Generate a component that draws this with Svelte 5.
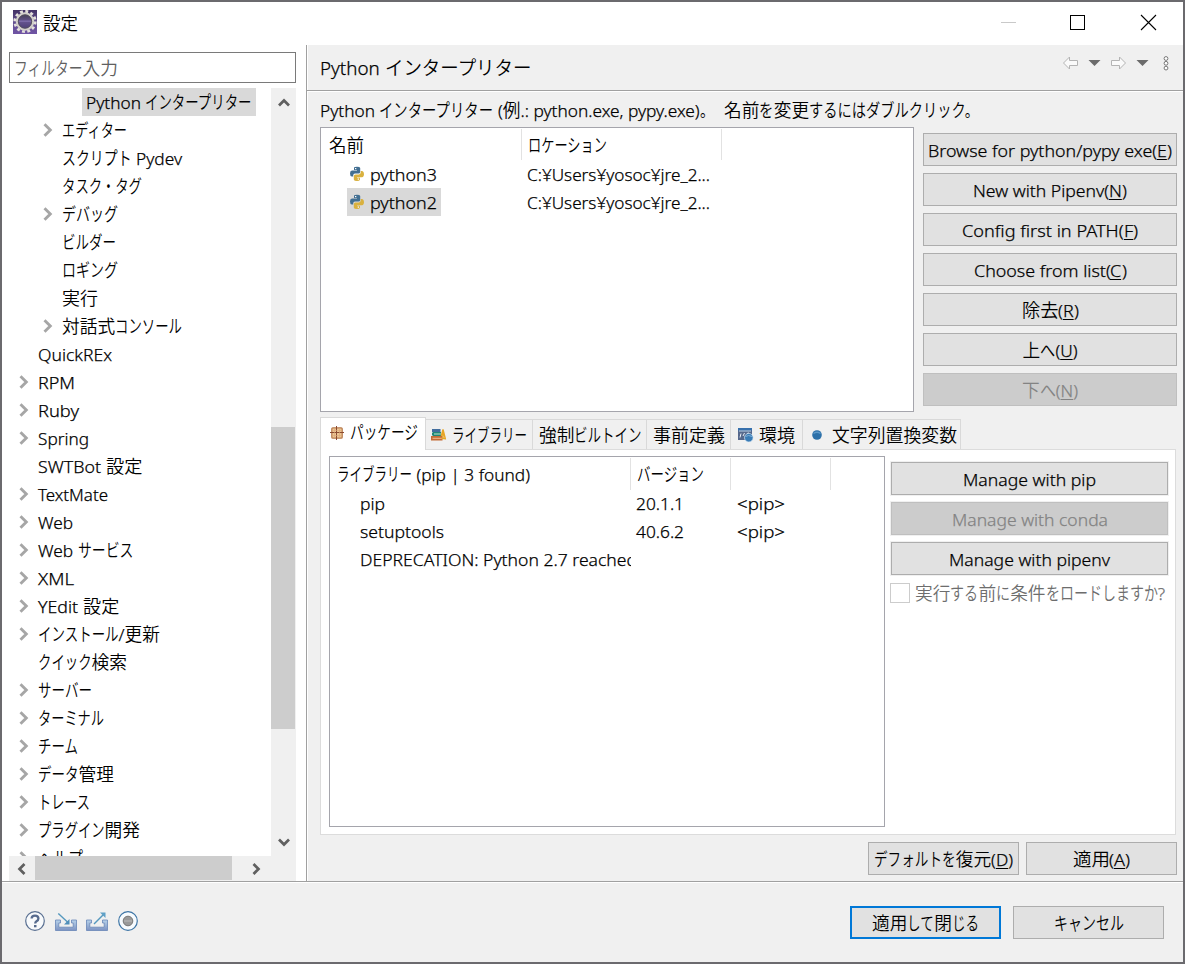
<script>
  const tree = [
    ['Python インタープリター', 2, false, 166, true],
    ['エディター', 1, true, 65],
    ['スクリプト Pydev', 1, false, 120],
    ['タスク・タグ', 1, false, 80],
    ['デバッグ', 1, true, 56],
    ['ビルダー', 1, false, 54],
    ['ロギング', 1, false, 56],
    ['実行', 1, false, 36],
    ['対話式コンソール', 1, true, 120],
    ['QuickREx', 0, false, 74],
    ['RPM', 0, true, 37],
    ['Ruby', 0, true, 41],
    ['Spring', 0, true, 51],
    ['SWTBot 設定', 0, false, 104],
    ['TextMate', 0, true, 70],
    ['Web', 0, true, 35],
    ['Web サービス', 0, true, 95],
    ['XML', 0, true, 36],
    ['YEdit 設定', 0, true, 81],
    ['インストール/更新', 0, true, 122],
    ['クイック検索', 0, false, 89],
    ['サーバー', 0, true, 54],
    ['ターミナル', 0, true, 66],
    ['チーム', 0, true, 40],
    ['データ管理', 0, true, 76],
    ['トレース', 0, true, 52],
    ['プラグイン開発', 0, true, 102],
    ['ヘルプ', 0, true, 45]
  ];
  const sideButtons = [
    ['Browse for python/pypy exe(&E)', 244],
    ['New with Pipenv(&N)', 154],
    ['Config first in PATH(&F)', 176],
    ['Choose from list(&C)', 153],
    ['除去(&R)', 57],
    ['上へ(&U)', 55],
    ['下へ(&N)', 56, true]
  ];
  const packages = [
    ['pip', 25, '20.1.1', 48, '<pip>', 48],
    ['setuptools', 84, '40.6.2', 48, '<pip>', 48],
    ['DEPRECATION: Python 2.7 reached', 277, '', 0, '', 0]
  ];

  function runs(s) {
    return (s.match(/&[A-Z]|[\u3001-\u30ff]+|[\u4e00-\u9fff]+|[^&\u3001-\u30ff\u4e00-\u9fff]+/g) || []).map((r) => {
      if (r[0] === '&') return { kind: 'key', s: r[1] };
      if (/[\u3001-\u30ff]/.test(r)) return { kind: 'kana', s: r };
      if (/[\u4e00-\u9fff]/.test(r)) return { kind: 'kanji', s: r };
      return { kind: 'latin', s: r };
    });
  }

  /* Proportional setting: kana take up the slack, otherwise the whole line does. */
  function fit(node, width) {
    const parts = [...node.children];
    const sizes = parts.map((p) => p.getBoundingClientRect().width);
    const total = sizes.reduce((a, b) => a + b, 0);
    const kana = parts.reduce((a, p, i) => a + (p.classList.contains('kana') ? sizes[i] : 0), 0);
    const k = kana ? (width - total + kana) / kana : width / total;
    parts.forEach((p, i) => {
      if (kana && !p.classList.contains('kana')) return;
      p.style.transform = `scaleX(${k})`;
      p.style.marginRight = `${sizes[i] * (k - 1)}px`;
    });
  }
</script>

{#snippet txt(s, w)}<span class="t" use:fit={w}>{#each runs(s) as r}<span class={r.kind}>{r.s}</span>{/each}</span>{/snippet}

{#snippet btn(s, w, off)}<button class="btn" class:off disabled={off}>{@render txt(s, w)}</button>{/snippet}

{#snippet python()}
  <svg class="py" width="16" height="16" viewBox="0 0 16 16">
    <path fill="#426f92" d="M5 1.500Q5.300.8 8 .8q3 0 3.200 1.200v4Q11 7.500 9.500 7.500H6Q4.200 7.500 4.200 9.500v1H2.800Q1 10.200 1 7.500 1 4.700 3 4.500h5V4H5z" />
    <path fill="#d9b13f" d="M11.700 5h1.500Q15 5.300 15 8q0 3-2 3.200H8v.6h3v2Q10.500 15 8 15q-3 0-3.200-1.500V10Q5 8.400 6.500 8.400H10q1.700 0 1.700-1.800z" />
    <rect x="6" y="2" width="1.300" height="1.200" fill="#fff" /><rect x="8.700" y="12.500" width="1.300" height="1.200" fill="#fff" />
  </svg>
{/snippet}

<div class="window">
  <header class="titlebar">
    <svg class="app-icon" width="24" height="24" viewBox="0 0 24 24">
      <defs>
        <linearGradient id="pur" x2="0" y2="1"><stop offset="0" stop-color="#433264" /><stop offset=".5" stop-color="#63508f" /><stop offset="1" stop-color="#7054a5" /></linearGradient>
        <linearGradient id="core" x2="0" y2="1"><stop offset="0" stop-color="#3f3c4c" /><stop offset=".5" stop-color="#66548f" /><stop offset="1" stop-color="#4a3c72" /></linearGradient>
      </defs>
      <rect width="24" height="24" fill="url(#pur)" />
      <circle cx="12" cy="11.500" r="10.200" fill="none" stroke="#e4e1dc" stroke-width="2.800" stroke-dasharray="2.900 2.440" />
      <circle cx="12" cy="11.500" r="8.100" fill="url(#core)" stroke="#d2cfca" stroke-width="2.400" />
      <circle cx="12" cy="11.500" r="6.700" fill="none" stroke="#55505c" stroke-width=".9" />
      <path d="M6 11.200h12" stroke="#7d6ca9" stroke-width="1.400" />
    </svg>
    {@render txt('設定', 35)}
    <svg class="winctl" width="160" height="20" viewBox="0 0 160 20">
      <path d="M1 10.500h15" stroke="#c9c9c9" />
      <rect x="70.500" y="3.500" width="14" height="14" fill="none" stroke="#000" />
      <path d="M141 3l15 15M156 3l-15 15" stroke="#000" stroke-width="1.100" />
    </svg>
  </header>

  <main>
    <aside>
      <div class="filter">{@render txt('フィルター入力', 104)}</div>
      <div class="treebox">
        <div class="tree">
          {#each tree as [label, depth, arrow, w, sel]}
            <div class="node d{depth}">
              <span class="twisty">{#if arrow}<svg width="10" height="14" viewBox="0 0 10 14"><path d="M1.500 1.200 7.300 7l-5.800 5.800" fill="none" stroke="#a6a6a6" stroke-width="2.900" /></svg>{/if}</span>
              <span class="lab" class:sel>{@render txt(label, w)}</span>
            </div>
          {/each}
        </div>
        <div class="vbar">
          <svg width="12" height="9" viewBox="0 0 12 9"><path d="M1 7.500 6 2.500l5 5" fill="none" stroke="#606060" stroke-width="2.700" /></svg>
          <div class="vthumb"></div>
          <svg class="down" width="12" height="9" viewBox="0 0 12 9"><path d="M1 1.500 6 6.500l5-5" fill="none" stroke="#606060" stroke-width="2.700" /></svg>
        </div>
      </div>
      <div class="hbar">
        <svg width="9" height="12" viewBox="0 0 9 12"><path d="M7.500 1 2.500 6l5 5" fill="none" stroke="#606060" stroke-width="2.700" /></svg>
        <div class="hthumb"></div>
        <svg width="9" height="12" viewBox="0 0 9 12"><path d="M1.500 1 6.500 6l-5 5" fill="none" stroke="#606060" stroke-width="2.700" /></svg>
      </div>
    </aside>

    <section class="page">
      <div class="head">
        <h1>{@render txt('Python インタープリター', 211)}</h1>
        <svg width="112" height="20" viewBox="0 0 112 20">
          <g fill="#fafafa" stroke="#b4b4b4" stroke-linejoin="round">
            <path d="M.5 10 6.500 4v3.500h8v5h-8V16z" />
            <path d="M62.500 10l-6-6v3.500h-8v5h8V16z" />
          </g>
          <path d="M25.500 7h12l-6 6zM73.500 7h12l-6 6z" fill="#6b6b6b" />
          <g fill="#fff" stroke="#777"><circle cx="103" cy="5.500" r="1.900" /><circle cx="103" cy="10.300" r="1.900" /><circle cx="103" cy="15.100" r="1.900" /></g>
        </svg>
      </div>

      <div class="note">
        {@render txt('Python インタープリター (例.: python.exe, pypy.exe)。', 394)}
        <span class="second">{@render txt('名前を変更するにはダブルクリック。', 255)}</span>
      </div>

      <div class="upper">
        <div class="table interp">
          <div class="thead"><div>{@render txt('名前', 35)}</div><div>{@render txt('ロケーション', 79)}</div></div>
          <div class="row"><div class="name"><span>{@render python()}{@render txt('python3', 67)}</span></div>{@render txt('C:¥Users¥yosoc¥jre_2...', 183)}</div>
          <div class="row"><div class="name"><span class="sel">{@render python()}{@render txt('python2', 67)}</span></div>{@render txt('C:¥Users¥yosoc¥jre_2...', 183)}</div>
        </div>
        <div class="buttons">
          {#each sideButtons as [s, w, off]}{@render btn(s, w, off)}{/each}
        </div>
      </div>

      <div class="tabs">
        <div class="tab active">
          <svg width="14" height="14" viewBox="0 0 14 14"><rect x="1.800" y="1.800" width="10.400" height="10.400" rx="1" fill="#edc795" stroke="#b97d50" stroke-width="1.300" /><path d="M6.500 0v14M0 6.500h14" stroke="#8b4a30" /><path d="M4.500 2v10M9.500 2v10M2 4.500h10M2 9.500h10" stroke="#dca778" stroke-width=".6" /></svg>
          {@render txt('パッケージ', 68)}
        </div>
        <div class="tab lib">
          <svg width="17" height="15" viewBox="0 0 17 15"><path d="M2 2h8.500v3H2z" fill="#426d9d" /><path d="M3 5h8v4H3l-1-1V6z" fill="#1f8778" /><path d="M4 7h7" stroke="#bfe3c6" /><path d="M1 9h11.500v4.500H1z" fill="#c46b35" /><path d="M2.500 11.300h9.500" stroke="#f1be91" /><path d="M11.300 9 13 2.500 15.500 12.500M13 3v8.500M11.500 11.500h4" fill="none" stroke="#e7a526" stroke-width="1.400" /></svg>
          {@render txt('ライブラリー', 75)}
        </div>
        <div class="tab forced">{@render txt('強制ビルトイン', 103)}</div>
        <div class="tab pre">{@render txt('事前定義', 72)}</div>
        <div class="tab env">
          <svg width="17" height="16" viewBox="0 0 17 16"><rect x="1" y="1" width="14" height="12" fill="#56688c" /><rect x="1" y="1" width="14" height="2.500" fill="#3770ac" /><path d="M2 4h12" stroke="#bad2e8" /><path d="M3 10.500l1-4M6 9l1.500-3M10 6.500l2-.5" stroke="#e9eef5" stroke-width="1" /><circle cx="11.800" cy="10.700" r="4.300" fill="#397bb5" stroke="#d7e8f7" stroke-width=".7" /><path d="M8.500 9.500q3-2 6.500 0" fill="none" stroke="#7fb0d8" /></svg>
          {@render txt('環境', 36)}
        </div>
        <div class="tab vars">
          <svg width="12" height="12" viewBox="0 0 12 12"><circle cx="6" cy="6" r="4.800" fill="#2c70a9" /><path d="M2.500 4.500Q6 2 9.500 4.500" fill="none" stroke="#5d98c8" stroke-width="1.500" /></svg>
          {@render txt('文字列置換変数', 125)}
        </div>
      </div>

      <div class="panel">
        <div class="table pkgs">
          <div class="thead"><div>{@render txt('ライブラリー (pip | 3 found)', 193)}</div><div>{@render txt('バージョン', 67)}</div><div></div></div>
          {#each packages as [a, aw, b, bw, c, cw]}
            <div class="row"><div class="pname">{@render txt(a, aw)}</div><div class="pver">{#if b}{@render txt(b, bw)}{/if}</div>{#if c}{@render txt(c, cw)}{/if}</div>
          {/each}
        </div>
        <div class="manage">
          {@render btn('Manage with pip', 133)}
          {@render btn('Manage with conda', 156, true)}
          {@render btn('Manage with pipenv', 161)}
          <div class="check"><i></i>{@render txt('実行する前に条件をロードしますか?', 250)}</div>
        </div>
      </div>

      <div class="apply">
        {@render btn('デフォルトを復元(&D)', 139)}
        {@render btn('適用(&A)', 58)}
      </div>
    </section>
  </main>

  <footer>
    <svg width="116" height="24" viewBox="0 0 116 24">
      <defs><linearGradient id="tray" x2="0" y2="1"><stop offset="0" stop-color="#b7d2ea" /><stop offset="1" stop-color="#7c92c2" /></linearGradient></defs>
      <circle cx="11" cy="12" r="9.300" fill="#f8fafc" stroke="#596f91" stroke-width="1.200" />
      <path d="M7.600 9.500Q7.700 6.700 11 6.700t3.400 2.700Q14.400 11 12.500 12.200 11.200 13 11.200 14.600" fill="none" stroke="#576b8e" stroke-width="2.300" /><rect x="10" y="16" width="2.500" height="2.300" fill="#576b8e" />
      <g fill="url(#tray)" stroke="#6886b8" stroke-width=".8">
        <path d="M31.500 11h5v3h-1.700v4.200h14.400V14h-1.700v-3h5v10.500h-21z" />
        <path d="M62.500 11h5v3h-1.700v4.200h14.400V14h-1.700v-3h5v10.500h-21z" />
      </g>
      <path d="M34.300 4.500 44 13.500" fill="none" stroke="#5598be" stroke-width="1.400" /><path d="M45.500 15.500h-5.500l5.500-5.500z" fill="#4f8eba" />
      <path d="M70 15 80 5" fill="none" stroke="#5598be" stroke-width="1.400" /><path d="M81.500 3.500v5.500l-5.500-5.500z" fill="#5fa0c6" />
      <circle cx="104" cy="12" r="9.300" fill="#f7fbfe" stroke="#3d75a6" stroke-width="1.200" />
      <circle cx="104" cy="12" r="4.800" fill="#999" stroke="#777" /><path d="M100 12h8" stroke="#bbb" />
    </svg>
    <div class="actions">
      <button class="btn primary">{@render txt('適用して閉じる', 107)}</button>
      {@render btn('キャンセル', 70)}
    </div>
  </footer>
</div>

<style>
  :global(body) { background: #f0f0f0; overflow: hidden; }
  * { box-sizing: border-box; }
  .window {
    width: 1185px; height: 964px; border: 2px solid #6b6a6e; background: #f0f0f0;
    display: flex; flex-direction: column; color: #000;
    font: 350 17.3px/28px "Noto Sans", "Noto Sans CJK JP", sans-serif;
  }
  svg { display: block; flex: none; }
  .t { display: inline-flex; align-items: baseline; white-space: pre; flex: none; height: 28px; line-height: 28px; }
  .t::before { content: ""; width: 0; height: 20.500px; align-self: baseline; }
  .t span { display: block; transform-origin: 0 50%; flex: none; }
  .latin, .key { -webkit-text-stroke: .25px currentColor; }
  .kana, .kanji { font-family: "Noto Sans CJK JP", sans-serif; font-size: 17.7px; line-height: 25px; font-weight: 350; }
  .kana { font-size: 18.500px; }
  .key { text-decoration: underline; text-underline-offset: 2px; text-decoration-thickness: 1px; text-decoration-skip-ink: none; }

  .titlebar { height: 43px; background: #fff; display: flex; align-items: center; padding-left: 11px; flex: none; }
  .app-icon { margin: 0 6px 3px 0; }
  .titlebar .t { margin-bottom: 1px; }
  .winctl { margin: 0 23px 4px auto; }

  main { height: 836px; display: flex; flex: none; }
  aside { width: 304px; background: #fff; padding: 7px 0 0 7px; flex: none; }
  .filter { width: 287px; height: 31px; border: 1px solid #7a7a7a; padding: 1px 0 0 4px; line-height: 28px; color: #606060; }
  .treebox { display: flex; margin-top: 5px; height: 768px; width: 287px; }
  .tree { width: 262px; height: 768px; overflow: hidden; }
  .node { display: flex; height: 28px; }
  .node.d1 { padding-left: 24px; }
  .node.d2 { padding-left: 48px; }
  .twisty { width: 25px; display: flex; align-items: center; padding: 0 0 0 10px; flex: none; }
  .lab { padding: 0 4px; height: 28px; display: flex; }
  .sel { background: #d9d9d9; }
  .vbar { width: 25px; background: #f0f0f0; padding-top: 10px; display: flex; flex-direction: column; }
  .vbar svg { margin-left: 6.5px; }
  .vthumb { width: 24px; height: 302px; background: #cdcdcd; margin-top: 320px; }
  .vbar .down { margin-top: 109px; }
  .hbar { width: 287px; height: 25px; background: #f0f0f0; display: flex; align-items: center; padding-left: 8px; }
  .hthumb { width: 197px; height: 24px; background: #cdcdcd; margin: 0 20px 1px 9px; }

  .page { flex: 1; border-left: 1px solid #a0a0a0; padding-right: 6px; box-shadow: inset 1px 0 #fff; }
  .head { height: 47px; margin-right: -6px; padding-left: 13px; display: flex; justify-content: space-between; background: linear-gradient(#a0a0a0, #a0a0a0) 0 45px / 100% 1px no-repeat, linear-gradient(#fff, #fff) 0 46px / 100% 1px no-repeat; }
  h1 { margin: 8px 0 0; font: 350 18.8px/30px "Noto Sans", "Noto Sans CJK JP", sans-serif; }
  h1 :global(.kana) { font-size: 19.500px; }
  .head svg { margin: 8px 8px 0 0; }
  .note { height: 35px; padding: 4px 0 0 13px; display: flex; }
  .second { margin-left: 10px; }
  .upper { padding-left: 13px; display: flex; gap: 9px; }
  .table { background: #fff; border: 1px solid #a5a5ac; overflow: hidden; }
  .interp { width: 594px; height: 285px; }
  .thead { display: flex; height: 31px; margin-top: 1px; }
  .thead > div { border-right: 1px solid #e2e2e2; padding: 2px 0 0 6px; flex: none; }
  .interp .thead > div { width: 200px; }
  .interp .thead > div:first-child { width: 201px; padding-left: 8px; }
  .row { display: flex; height: 28px; }
  .name { width: 206px; padding-left: 26px; display: flex; flex: none; }
  .name > span:not(.t) { display: flex; align-items: center; width: 94px; height: 28px; padding-left: 2px; }
  .py { margin-right: 5px; }
  .buttons { width: 254px; padding-top: 6px; display: flex; flex-direction: column; gap: 7px; }
  .btn { height: 33px; width: 100%; padding: 2px 0 0; margin: 0; border: 1px solid #adadad; border-radius: 0; background: #e1e1e1; color: #000; font: inherit; line-height: 28px; display: flex; justify-content: center; align-items: center; flex: none; }
  .btn.off { background: #ccc; border-color: #bfbfbf; color: #838383; }

  .tabs { display: flex; align-items: flex-end; height: 37px; padding-left: 13px; }
  .tab { height: 30px; border-top: 1px solid #d9d9d9; border-right: 1px solid #d9d9d9; display: flex; align-items: center; flex: none; padding-top: 1px; }
  .tab.active { height: 33px; width: 106px; background: #fff; border-left: 1px solid #d9d9d9; padding: 0 0 3px 9px; gap: 6px; margin-bottom: -1px; position: relative; z-index: 1; }
  .lib { width: 107px; padding-left: 4px; gap: 5px; }
  .forced { width: 114px; padding-left: 6px; }
  .pre { width: 84px; padding-left: 6px; }
  .env { width: 72px; padding-left: 6px; gap: 5px; }
  .vars { width: 158px; padding-left: 8px; gap: 9px; }
  .env svg, .vars svg, .lib svg { margin-bottom: 1px; }

  .panel { margin-left: 13px; width: 856px; height: 386px; border: 1px solid #dcdcdc; background: #fff; padding: 6px 0 0 8px; display: flex; gap: 6px; }
  .pkgs { width: 556px; height: 371px; flex: none; }
  .pkgs .thead > div { width: 100px; height: 32px; }
  .pkgs .thead > div:first-child { width: 301px; padding-left: 7px; }
  .pname { width: 301px; padding-left: 30px; overflow: hidden; display: flex; flex: none; }
  .pver { width: 106px; padding-left: 5px; flex: none; }
  .manage { width: 277px; padding-top: 6px; display: flex; flex-direction: column; gap: 7px; }
  .manage .btn { box-shadow: 0 0 0 1px #f0f0f0; }
  .check { display: flex; align-items: center; color: #6d6d6d; height: 22px; margin: 0 0 0 -1px; }
  .check i { width: 20px; height: 20px; border: 1px solid #ccc; margin-right: 5px; flex: none; }
  .apply { display: flex; justify-content: flex-end; gap: 7px; padding-top: 7px; }
  .apply .btn { width: 151px; }

  footer { flex: 1; border-top: 1px solid #a0a0a0; box-shadow: inset 0 1px #fff; display: flex; justify-content: space-between; padding: 24px 19px 0 22px; }
  footer > svg { margin-top: 3px; }
  .actions { display: flex; gap: 12px; }
  .actions .btn { width: 151px; }
  .actions .primary { border: 2px solid #0078d7; }
</style>
